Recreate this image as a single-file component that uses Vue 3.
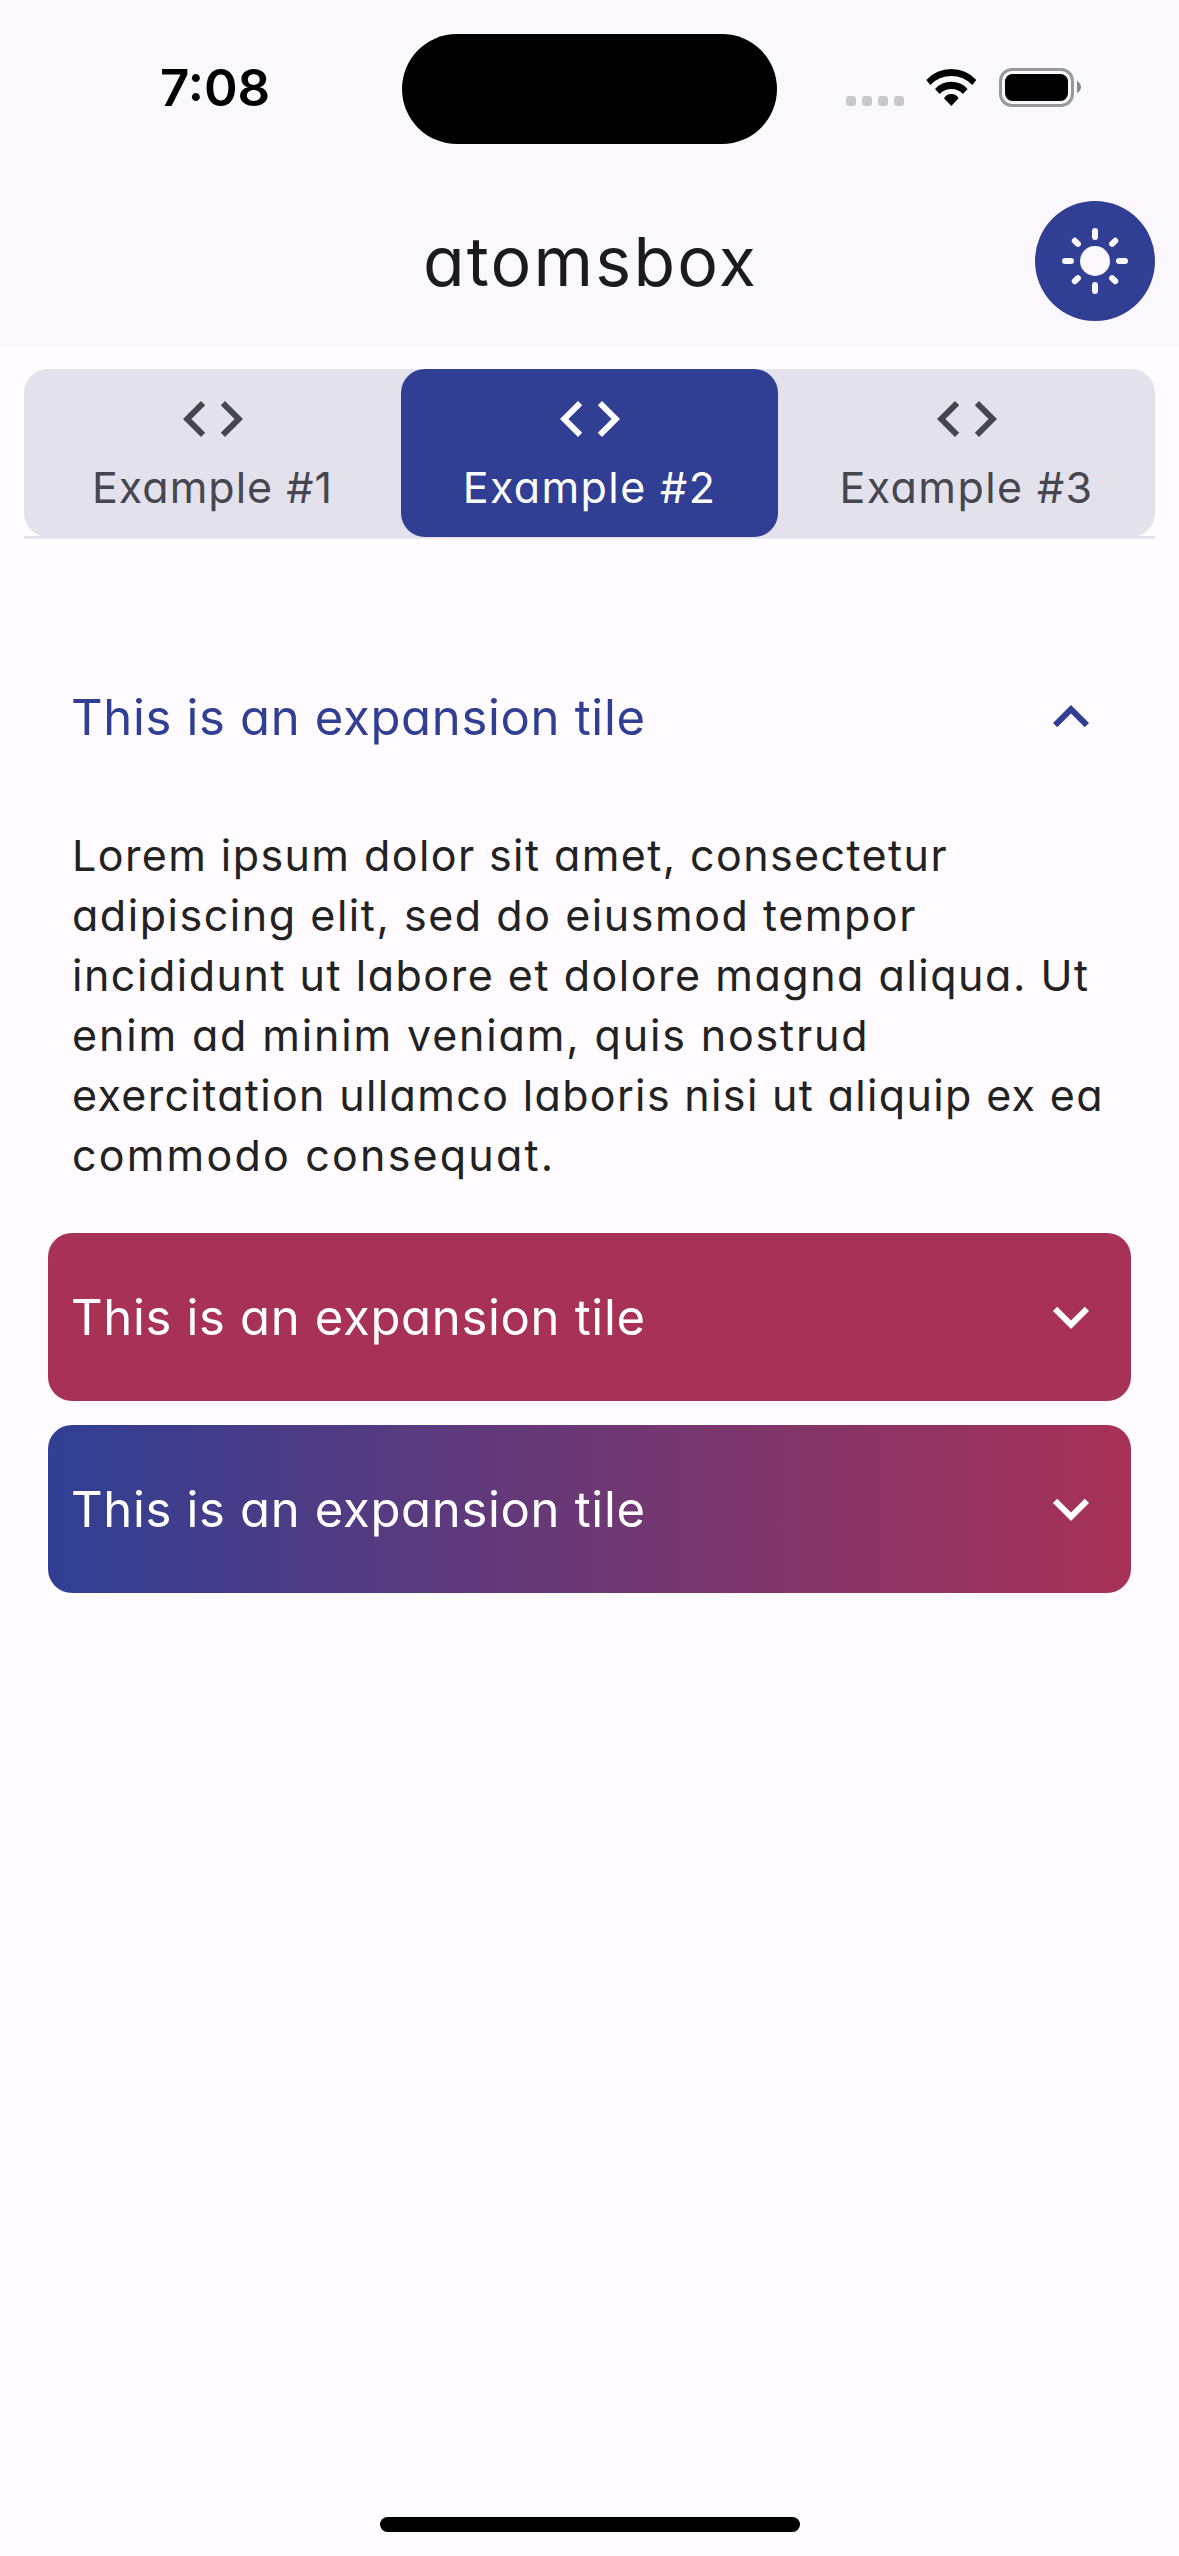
<script setup>
import { ref } from 'vue'

const tabs = [
  { label: 'Example #1', tracking: 1 },
  { label: 'Example #2', tracking: 1.4 },
  { label: 'Example #3', tracking: 1.4 },
]
const activeTab = ref(1)

const body = [
  { text: 'Lorem ipsum dolor sit amet, consectetur', tracking: 1.41 },
  { text: 'adipiscing elit, sed do eiusmod tempor', tracking: 1.54 },
  { text: 'incididunt ut labore et dolore magna aliqua. Ut', tracking: 1.52 },
  { text: 'enim ad minim veniam, quis nostrud', tracking: 1.85 },
  { text: 'exercitation ullamco laboris nisi ut aliquip ex ea', tracking: 1.34 },
  { text: 'commodo consequat.', tracking: 2.2 },
]

const tiles = ref([
  { kind: 'plain', title: 'This is an expansion tile', open: true },
  { kind: 'solid', title: 'This is an expansion tile', open: false },
  { kind: 'gradient', title: 'This is an expansion tile', open: false },
])

const rays = [0, 45, 90, 135, 180, 225, 270, 315]
</script>

<template>
  <div class="screen">
    <header class="top">
      <div class="status">
        <div class="time">7:08</div>
        <div class="island"></div>
        <div class="indicators">
          <svg width="235" height="39" viewBox="0 0 235 39">
            <g fill="#c8c6ca">
              <rect v-for="i in 4" :key="i" :x="(i - 1) * 16" y="28" width="10" height="10" rx="3" />
            </g>
            <path d="M80.3 12A33.9 33.9 0 0 1 130.3 12L126.3 17A29 29 0 0 0 84.3 17Z" />
            <path d="M89 21A21.8 21.8 0 0 1 121.6 21L116.9 26A16 16 0 0 0 93.7 26Z" />
            <path d="M98 30.3A8.35 8.35 0 0 1 112.6 30.3L105.3 38Z" />
            <rect x="154.5" y="1.5" width="72" height="36" rx="11.5" fill="none" stroke="#99979b" stroke-width="3" />
            <rect x="159" y="6" width="63" height="27" rx="7.5" />
            <path d="M231 13c2.5 1 4 3.4 4 6s-1.5 5-4 6z" fill="#8a888c" />
          </svg>
        </div>
      </div>
      <div class="appbar">
        <h1 class="title">atomsbox</h1>
        <button class="theme">
          <svg width="120" height="120" viewBox="0 0 120 120">
            <circle cx="60" cy="60" r="15" fill="#faf8fd" />
            <line
              v-for="r in rays"
              :key="r"
              x1="60"
              x2="60"
              :y1="r % 90 ? 31.4 : 30"
              :y2="r % 90 ? 35.8 : 36"
              :transform="`rotate(${r} 60 60)`"
              stroke="#faf8fd"
              stroke-width="6"
              stroke-linecap="round"
            />
          </svg>
        </button>
      </div>
    </header>

    <nav class="tabs">
      <div class="tab-row">
        <div v-for="(t, i) in tabs" :key="t.label" class="tab" :class="{ active: i === activeTab }">
          <svg width="72" height="72" viewBox="0 0 24 24" fill="currentColor">
            <path d="M9.4 16.6L4.8 12l4.6-4.6L8 6l-6 6 6 6 1.4-1.4zm5.2 0l4.6-4.6-4.6-4.6L16 6l6 6-6 6-1.4-1.4z" />
          </svg>
          <span class="label" :style="{ letterSpacing: t.tracking + 'px' }">{{ t.label }}</span>
        </div>
      </div>
    </nav>

    <main class="list">
      <section v-for="tile in tiles" :key="tile.kind" class="tile" :class="tile.kind">
        <div class="tile-head">
          <span class="tile-title">{{ tile.title }}</span>
          <svg width="72" height="72" viewBox="0 0 24 24" fill="currentColor">
            <path v-if="tile.open" d="M12 8l-6 6 1.41 1.41L12 10.83l4.59 4.58L18 14z" />
            <path v-else d="M16.59 8.59L12 13.17 7.41 8.59 6 10l6 6 6-6z" />
          </svg>
        </div>
        <div v-if="tile.open" class="tile-body">
          <div v-for="l in body" :key="l.text" class="line" :style="{ letterSpacing: l.tracking + 'px' }">{{ l.text }}</div>
        </div>
      </section>
    </main>

    <div class="home"></div>
  </div>
</template>

<style scoped>
.screen {
  display: flex;
  flex-direction: column;
  width: 1179px;
  height: 2556px;
  overflow: hidden;
  background: #fffbff;
  color: #1b1b1f;
  font-family: Inter, 'Open Sans', sans-serif;
  font-feature-settings: 'cv11';
}
svg {
  display: block;
  flex: none;
}
.top {
  height: 345px;
  background: #faf8fd;
}
.status {
  display: grid;
  grid-template-columns: 402px 375px 402px;
  height: 177px;
  padding-top: 34px;
  box-sizing: border-box;
}
.island {
  height: 110px;
  border-radius: 55px;
  background: #000;
}
.time {
  height: 107px;
  padding-left: 160px;
  font-size: 51px;
  font-weight: 600;
  line-height: 107px;
  color: #000;
}
.indicators {
  display: flex;
  align-items: center;
  justify-content: flex-end;
  height: 107px;
  padding-right: 98px;
}
.appbar {
  display: grid;
  grid-template-columns: 144px 1fr 144px;
  align-items: center;
  height: 168px;
}
.title {
  grid-column: 2;
  margin: 0;
  padding-left: 2px;
  font-size: 68px;
  font-weight: 400;
  line-height: 80px;
  letter-spacing: 2.2px;
  text-align: center;
  color: #1b1b1f;
}
.theme {
  width: 120px;
  height: 120px;
  padding: 0;
  border: 0;
  border-radius: 50%;
  background: #303f93;
}
.tabs {
  margin: 24px 24px 0;
  height: 169px;
  border-bottom: 1px solid #eeebf3;
  background: linear-gradient(#e3e1ec, #e3e1ec) bottom / 100% 2px no-repeat;
}
.tab-row {
  display: flex;
  height: 168px;
  border-radius: 24px;
  background: #e3e1ec;
}
.tab {
  display: flex;
  flex: 1;
  flex-direction: column;
  align-items: center;
  box-sizing: border-box;
  padding-top: 14px;
  border-radius: 24px;
  color: #46464f;
}
.tab.active {
  background: #303f93;
  color: #fff;
}
.label {
  font-size: 43px;
  line-height: 65px;
  white-space: nowrap;
}
.list {
  display: flex;
  flex: 1;
  flex-direction: column;
  gap: 24px;
  padding: 94px 48px 0;
}
.tile {
  border-radius: 24px;
}
.tile-head {
  display: flex;
  align-items: center;
  justify-content: space-between;
  height: 168px;
  padding: 0 24px 0 23px;
}
.tile-title {
  font-size: 49px;
  letter-spacing: 0.68px;
  white-space: nowrap;
}
.plain {
  color: #303f93;
}
.solid {
  background: #a83156;
  color: #fff;
}
.gradient {
  background: linear-gradient(90deg, #303f93, #a83156);
  color: #fff;
}
.tile-body {
  padding: 24px 0 24px 24px;
  color: #222;
}
.line {
  font-size: 43px;
  line-height: 60px;
  white-space: nowrap;
}
.home {
  align-self: center;
  width: 420px;
  height: 15px;
  margin-bottom: 24px;
  border-radius: 8px;
  background: #000;
}
</style>

<style>
body {
  margin: 0;
}
</style>
